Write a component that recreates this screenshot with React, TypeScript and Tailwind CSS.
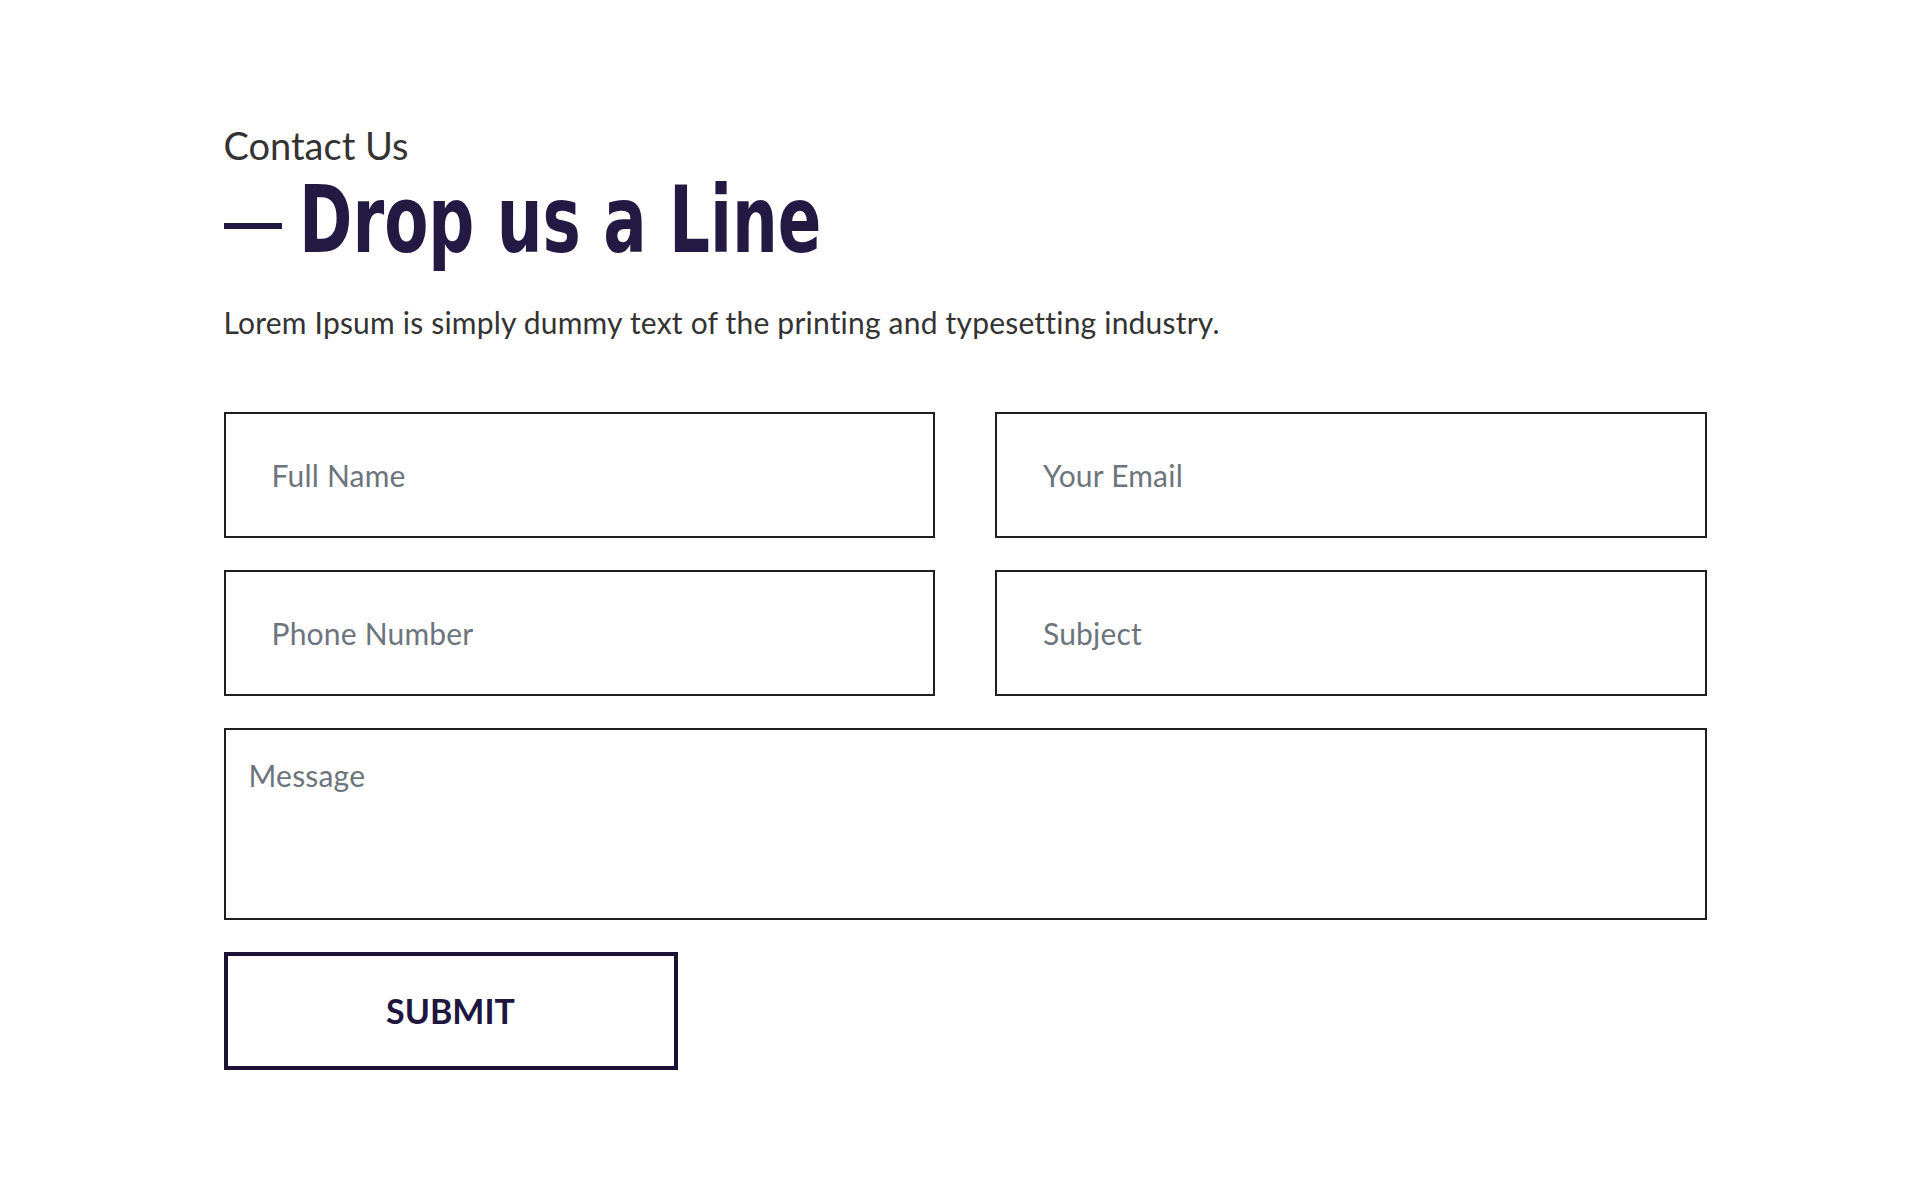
export default function App() {
  return (
    <div className="min-h-screen bg-white font-['Lato',sans-serif]">
      <div className="mx-auto w-[1483px] pt-[123px] pb-[130px]">
        {/* title block */}
        <p className="text-[38px] leading-[1.2] text-[#333333]">Contact Us</p>
        <div className="mt-[6px] flex items-center gap-[17px]">
          <span className="mt-[10px] block h-[6px] w-[58px] bg-[#231942]" />
          <h1 className="origin-left scale-x-[0.777] whitespace-nowrap font-['DejaVu_Sans_Condensed',sans-serif] text-[92px] font-bold leading-none text-[#231942]">
            Drop us a Line
          </h1>
        </div>
        <p className="mt-[37px] text-[30px] leading-[1.2] tracking-[0.2px] text-[#333333]">
          Lorem Ipsum is simply dummy text of the printing and typesetting industry.
        </p>

        {/* form */}
        <form className="mt-[72px]" onSubmit={(e) => e.preventDefault()}>
          <div className="grid grid-cols-2 gap-x-[60px] gap-y-[32px]">
            <input
              type="text"
              placeholder="Full Name"
              className="h-[126px] border-2 border-[#1f1f1f] pl-[46px] text-[30px] tracking-[0.2px] text-[#333333] outline-none placeholder:text-[#6c757d]"
            />
            <input
              type="email"
              placeholder="Your Email"
              className="h-[126px] border-2 border-[#1f1f1f] pl-[46px] text-[30px] tracking-[0.2px] text-[#333333] outline-none placeholder:text-[#6c757d]"
            />
            <input
              type="text"
              placeholder="Phone Number"
              className="h-[126px] border-2 border-[#1f1f1f] pl-[46px] text-[30px] tracking-[0.2px] text-[#333333] outline-none placeholder:text-[#6c757d]"
            />
            <input
              type="text"
              placeholder="Subject"
              className="h-[126px] border-2 border-[#1f1f1f] pl-[46px] text-[30px] tracking-[0.2px] text-[#333333] outline-none placeholder:text-[#6c757d]"
            />
            <textarea
              placeholder="Message"
              className="col-span-2 h-[192px] resize-none border-2 border-[#1f1f1f] pt-[27px] pl-[23px] text-[30px] leading-[1.2] tracking-[0.2px] text-[#333333] outline-none placeholder:text-[#6c757d]"
            />
          </div>
          <button
            type="submit"
            className="mt-[32px] flex h-[118px] w-[454px] items-center justify-center border-[4px] border-[#1c1235] text-[34px] font-bold text-[#1f1640]"
          >
            SUBMIT
          </button>
        </form>
      </div>
    </div>
  );
}
